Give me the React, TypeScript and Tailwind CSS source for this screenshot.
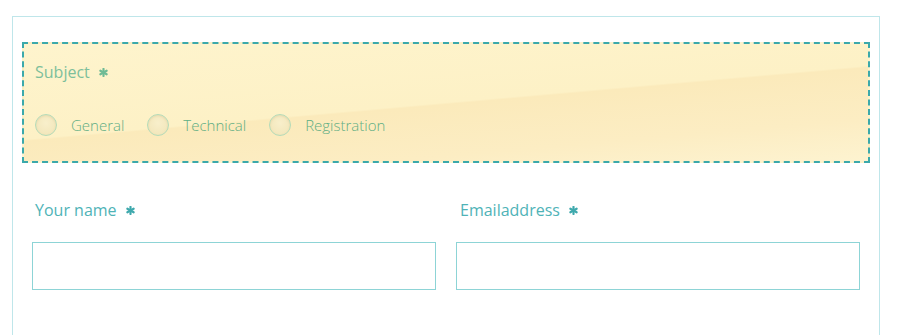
import React from "react";

function Star({ className }: { className?: string }) {
  return (
    <svg viewBox="0 0 10 10" className={className} aria-hidden="true">
      <g stroke="currentColor" strokeWidth="2.4" strokeLinecap="round">
        <line x1="5" y1="1" x2="5" y2="9" />
        <line x1="1.5" y1="3" x2="8.5" y2="7" />
        <line x1="1.5" y1="7" x2="8.5" y2="3" />
      </g>
    </svg>
  );
}

function Radio({ label }: { label: string }) {
  return (
    <label className="flex items-center gap-[14px]">
      <span className="w-[22px] h-[22px] rounded-full border border-[#b4dbb9] bg-[radial-gradient(circle_at_50%_40%,#f8efcb,#f1e4b6)] shadow-[inset_0_1px_2px_rgba(150,130,60,0.15)]" />
      <span className="text-[15px] font-light text-[#5fae84]">{label}</span>
    </label>
  );
}

function Field({ label, indent }: { label: string; indent: string }) {
  return (
    <div className="flex flex-col">
      <div className={`flex items-center gap-[9px] h-[24px] text-[16px] text-[#4fb3b7] ${indent}`}>
        <span>{label}</span>
        <Star className="w-[9px] h-[9px] text-[#3fa9ad]" />
      </div>
      <input
        type="text"
        className="mt-[20px] h-[48px] w-full border border-[#8dd4d6] bg-white outline-none"
      />
    </div>
  );
}

export default function App() {
  return (
    <div
      className="w-[898px] h-[335px] overflow-hidden bg-white pl-[12px] pt-[16px]"
      style={{ fontFamily: '"Open Sans", "Noto Sans", sans-serif' }}
    >
      <div className="w-[868px] border border-[#bfe6ea] px-[9px] pt-[25px] pb-[60px]">
        {/* Subject */}
        <div className="border-2 border-dashed border-[#3ba9ab] h-[121px] pl-[11px] pt-[16px] bg-[linear-gradient(175deg,#fef4cd_0%,#fdf1c6_50%,#fbeabb_51%,#fcedc3_78%,#fdf3d0_100%)]">
          <div className="flex items-center gap-[9px] h-[24px] text-[16px] text-[#7dbf9b]">
            <span>Subject</span>
            <Star className="w-[9px] h-[9px] text-[#6fbb95]" />
          </div>
          <div className="flex items-center gap-[23px] mt-[30px]">
            <Radio label="General" />
            <Radio label="Technical" />
            <Radio label="Registration" />
          </div>
        </div>

        {/* Name / email */}
        <div className="grid grid-cols-2 gap-[20px] px-[10px] mt-[35px]">
          <Field label="Your name" indent="pl-[3px]" />
          <Field label="Emailaddress" indent="pl-[4px]" />
        </div>
      </div>
    </div>
  );
}
